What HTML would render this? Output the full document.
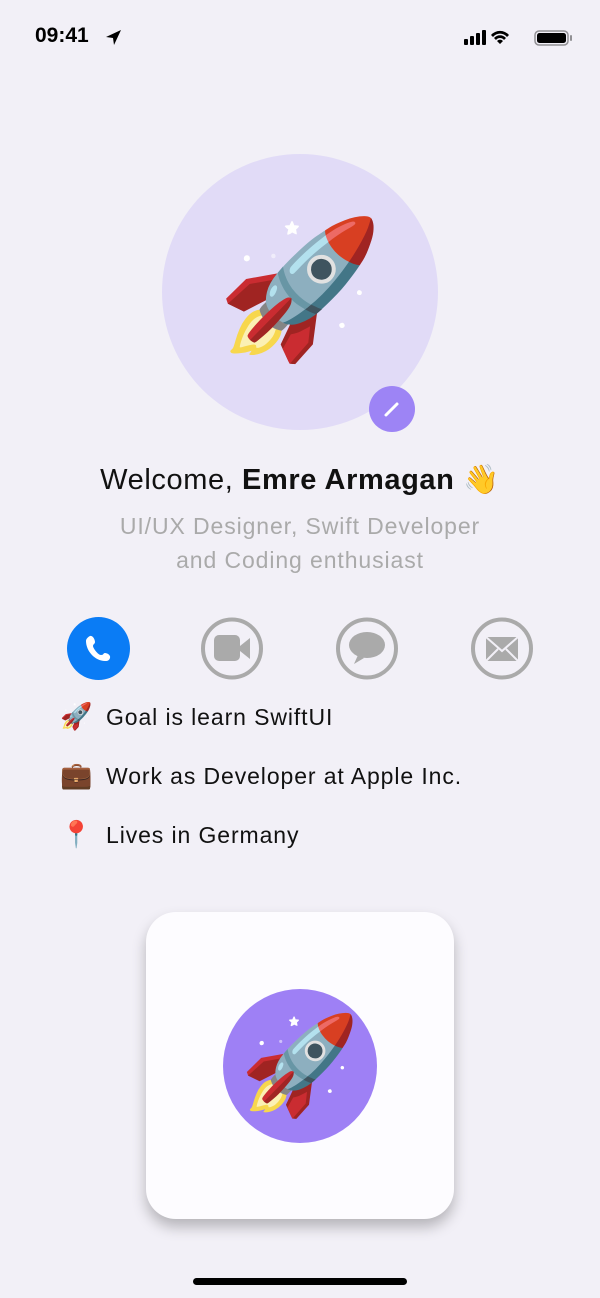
<!DOCTYPE html>
<html><head><meta charset="utf-8"><style>
body{margin:0;width:600px;height:1298px;background:#f2f0f7;font-family:"Liberation Sans",sans-serif;position:relative;overflow:hidden}
.a{position:absolute}
.t{font-size:23px;color:#111;letter-spacing:0.9px}
.e{font-family:"Noto Color Emoji",sans-serif}
</style></head><body>
<div class="a" style="left:35px;top:24px;font-size:21px;font-weight:bold;color:#000">09:41</div>
<svg class="a" style="left:104px;top:28px" width="20" height="20" viewBox="0 0 20 20"><path d="M17 2L2 9l7 1 1 7z" fill="#000"/></svg>
<svg class="a" style="left:464px;top:27px" width="110" height="22" viewBox="0 0 110 20">
<rect x="0" y="11" width="4" height="6" rx="1"/><rect x="6" y="8" width="4" height="9" rx="1"/><rect x="12" y="5" width="4" height="12" rx="1"/><rect x="18" y="2" width="4" height="15" rx="1"/>
<path d="M36 16l-3-3a4 4 0 0 1 6 0zM30 10a8 8 0 0 1 12 0l-2 2a5 5 0 0 0-8 0zM27 7a12 12 0 0 1 18 0l-2 2a9 9 0 0 0-14 0z"/>
<rect x="71" y="3" width="33" height="14" rx="4" fill="none" stroke="#000" stroke-opacity=".4" stroke-width="1.5"/><rect x="73" y="5" width="29" height="10" rx="2.5"/><rect x="106" y="7" width="2" height="6" rx="1" fill-opacity=".4"/></svg>

<div class="a" style="left:162px;top:154px;width:276px;height:276px;border-radius:50%;background:#e1dbf7"></div>
<div class="a e" style="left:200px;top:205px;width:200px;height:170px;text-align:center;font-size:134px;line-height:170px">🚀</div>
<div class="a" style="left:369px;top:386px;width:46px;height:46px;border-radius:50%;background:#9d84f5"></div>
<svg class="a" style="left:381px;top:398px" width="22" height="22" viewBox="0 0 22 22"><path d="M5 17L16 6" stroke="#fff" stroke-width="3" stroke-linecap="round"/></svg>

<div class="a" style="left:0;width:600px;top:463px;text-align:center;font-size:29px;color:#111;letter-spacing:0.6px">Welcome, <b>Emre Armagan</b> <span class="e">👋</span></div>
<div class="a" style="left:0;width:600px;top:509px;text-align:center;font-size:23px;color:#aaa;line-height:34px;letter-spacing:0.9px">UI/UX Designer, Swift Developer<br>and Coding enthusiast</div>

<div class="a" style="left:67px;top:617px;width:63px;height:63px;border-radius:50%;background:#0a7cf5"></div>
<svg class="a" style="left:81px;top:631px" width="36" height="36" viewBox="0 0 36 36"><path d="M9 5c3-1 5 4 5 6s-2 2-2 4 5 9 8 9 2-2 4-2 6 2 5 5-3 3-5 3C14 30 5 20 5 10c0-2 2-4 4-5z" fill="#fff"/></svg>
<svg class="a" style="left:200px;top:617px" width="334" height="63" viewBox="0 0 334 63">
<g fill="none" stroke="#aaa" stroke-width="4"><circle cx="32" cy="31.5" r="29"/><circle cx="167" cy="31.5" r="29"/><circle cx="302" cy="31.5" r="29"/></g>
<g fill="#aaa"><rect x="14" y="18" width="26" height="26" rx="5"/><path d="M40 29l10-8v21l-10-8z"/>
<ellipse cx="167" cy="28" rx="18" ry="13"/><path d="M158 38l-4 9 10-6z"/>
<path d="M286 20h32v24h-32z"/></g>
<path d="M286 20l16 14 16-14M286 44l12-12M318 44l-12-12" stroke="#f2f0f7" stroke-width="2" fill="none"/></svg>

<div class="a e" style="left:60px;top:702px;font-size:26px">🚀</div>
<div class="a t" style="left:106px;top:704px">Goal is learn SwiftUI</div>
<div class="a e" style="left:60px;top:761px;font-size:26px">💼</div>
<div class="a t" style="left:106px;top:763px">Work as Developer at Apple Inc.</div>
<div class="a e" style="left:60px;top:820px;font-size:26px">📍</div>
<div class="a t" style="left:106px;top:822px">Lives in Germany</div>

<div class="a" style="left:146px;top:912px;width:308px;height:307px;border-radius:30px;background:#fdfcff;box-shadow:0 8px 14px rgba(0,0,0,.25)"></div>
<div class="a" style="left:223px;top:989px;width:154px;height:154px;border-radius:50%;background:#9e80f5"></div>
<div class="a e" style="left:223px;top:1004px;width:154px;height:124px;text-align:center;font-size:96px;line-height:124px">🚀</div>
<div class="a" style="left:193px;top:1278px;width:214px;height:7px;border-radius:4px;background:#000"></div>
</body></html>
